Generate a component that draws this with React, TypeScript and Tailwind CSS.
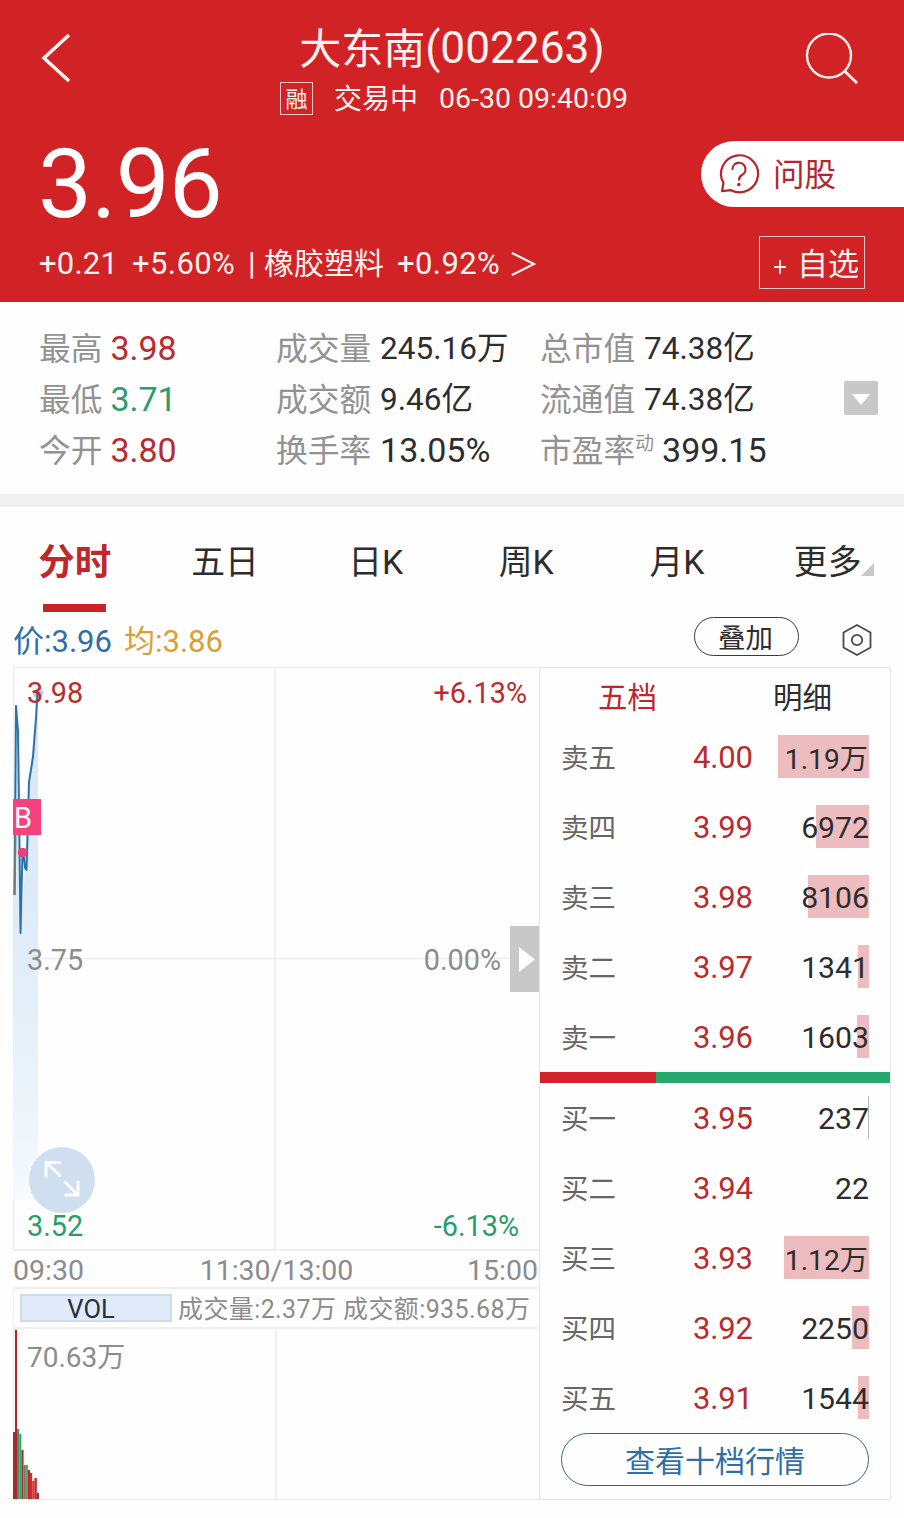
import clsx from 'clsx';

interface Level {
  label: string;
  price: string;
  volume: string;
  bar: number;
}

interface Stat {
  label: string;
  value: string;
  sup?: string;
  tone?: 'up' | 'down';
}

const TABS = ['分时', '五日', '日K', '周K', '月K', '更多'];

const STATS: Stat[][] = [
  [
    { label: '最高', value: '3.98', tone: 'up' },
    { label: '最低', value: '3.71', tone: 'down' },
    { label: '今开', value: '3.80', tone: 'up' },
  ],
  [
    { label: '成交量', value: '245.16万' },
    { label: '成交额', value: '9.46亿' },
    { label: '换手率', value: '13.05%' },
  ],
  [
    { label: '总市值', value: '74.38亿' },
    { label: '流通值', value: '74.38亿' },
    { label: '市盈率', sup: '动', value: '399.15' },
  ],
];

const ASKS: Level[] = [
  { label: '卖五', price: '4.00', volume: '1.19万', bar: 91 },
  { label: '卖四', price: '3.99', volume: '6972', bar: 53 },
  { label: '卖三', price: '3.98', volume: '8106', bar: 61 },
  { label: '卖二', price: '3.97', volume: '1341', bar: 11 },
  { label: '卖一', price: '3.96', volume: '1603', bar: 12 },
];

const BIDS: Level[] = [
  { label: '买一', price: '3.95', volume: '237', bar: 1 },
  { label: '买二', price: '3.94', volume: '22', bar: 0 },
  { label: '买三', price: '3.93', volume: '1.12万', bar: 85 },
  { label: '买四', price: '3.92', volume: '2250', bar: 17 },
  { label: '买五', price: '3.91', volume: '1544', bar: 11 },
];

// x, width, height, color
const VOLUME_BARS: [number, number, number, string][] = [
  [0, 2, 67, '#a8282d'],
  [2, 2, 169, '#b3242a'],
  [4, 2.2, 70, '#2f9c69'],
  [6.2, 2.2, 65, '#35a873'],
  [8.4, 2.2, 49, '#b0302f'],
  [10.6, 2.2, 34, '#6c7d58'],
  [12.8, 2.2, 34, '#6f9573'],
  [15, 2, 29, '#c3262b'],
  [17, 2.2, 26, '#d12a2e'],
  [19.2, 2.2, 18, '#d5393c'],
  [21.4, 2.4, 21, '#c3262b'],
  [23.8, 2.2, 6, '#a8282d'],
];

const hasCjk = (text: string) => /[\u4e00-\u9fff]/.test(text);

function Header() {
  return (
    <header className="h-[302px] bg-[#d12325] text-[#fff1ee]">
      <div className="flex h-[130px] items-start justify-between pl-[40px] pr-[44px] pt-[24px]">
        <svg className="mt-[8px] h-[52px] w-[60px]" viewBox="0 0 60 52" fill="none" stroke="currentColor" strokeWidth="3.6">
          <path d="M29 3 L4 26 L29 49" />
        </svg>
        <div className="flex flex-col items-center">
          <h1 className="flex h-[48px] leading-[48px]">
            <span className="pt-[2px] text-[42px]">大东南</span>
            <span className="text-[44.200px]">(002263)</span>
          </h1>
          <div className="mt-[9px] flex h-[35px] items-center pl-[4px] text-[28px] leading-[34px]">
            <span className="flex h-[33px] w-[33px] items-center justify-center border border-[#f7c9c6] pt-[3px] text-[22px]">融</span>
            <span className="ml-[21px] pt-[2px]">交易中</span>
            <span className="ml-[21px] text-[28.500px]">06-30 09:40:09</span>
          </div>
        </div>
        <svg className="mt-[9px] h-[54px] w-[56px]" viewBox="0 0 56 54" fill="none" stroke="currentColor" strokeWidth="2.4">
          <circle cx="25" cy="22.500" r="22" />
          <path d="M40.500 38 L53 50" strokeWidth="2.800" />
        </svg>
      </div>
      <div className="flex h-[105px] items-start justify-between pl-[38px]">
        <span className="mt-[4px] text-[96px] leading-[100px] tracking-[-0.800px] text-white">3.96</span>
        <button className="mt-[11px] flex h-[66px] w-[203px] items-center rounded-l-full bg-white pl-[17px] text-[#b3262a]">
          <svg className="h-[42px] w-[42px]" viewBox="0 0 42 42" fill="none" stroke="currentColor" strokeWidth="2.2">
            <path d="M5.500 30 A18.500 18.500 0 1 1 13 37.200 L4 38.200 Z" strokeLinejoin="round" />
            <path d="M14.500 17 A6.500 6.500 0 1 1 24 22 Q21 23.500 21 27.500" />
            <circle cx="20.800" cy="31.500" r="1.800" fill="currentColor" stroke="none" />
          </svg>
          <span className="ml-[13px] pt-[4px] text-[31.500px] leading-[40px]">问股</span>
        </button>
      </div>
      <div className="flex h-[55px] items-center justify-between pl-[38px] pr-[39px] text-[31px]">
        <div className="flex items-center pt-[2px] leading-[40px]">
          <span className="w-[94px] pl-px tracking-[0.200px]">+0.21</span>
          <span className="w-[116px] tracking-[0.400px]">+5.60%</span>
          <span className="w-[16px]">|</span>
          <span className="w-[133px] pt-px text-[30px]">橡胶塑料</span>
          <span className="w-[114px] tracking-[0.400px]">+0.92%</span>
          <svg className="h-[26px] w-[26px]" viewBox="0 0 26 26" fill="none" stroke="currentColor" strokeWidth="2.2">
            <path d="M1 2 L23 13 L1 24" />
          </svg>
        </div>
        <button className="flex h-[53px] w-[106px] items-center justify-end border border-[#f7c9c6] pr-[5px] leading-[50px]">
          <svg className="mr-[10px] mt-[9px] h-[14px] w-[14px]" viewBox="0 0 14 14" stroke="currentColor" strokeWidth="1.8">
            <path d="M1 7 H13 M7 0 V14" />
          </svg>
          <span className="pt-[4px]">自选</span>
        </button>
      </div>
    </header>
  );
}

function Stats() {
  return (
    <section className="flex h-[192px] items-start pl-[39px] pt-[21px] text-[#2d2d2d]">
      {STATS.map((column, i) => (
        <div key={i} className={clsx(i === 0 && 'w-[237px]', i === 1 && 'w-[264px]', i === 2 && 'w-[304px]')}>
          {column.map((stat) => (
            <div key={stat.label} className="flex h-[51px] items-center leading-[51px]">
              <span className="pt-[2px] text-[31.700px] text-[#929292]">{stat.label}</span>
              {stat.sup && <span className="mb-[14px] text-[19px] text-[#929292]">{stat.sup}</span>}
              <span
                className={clsx(
                  hasCjk(stat.value) ? 'text-[31.500px]' : 'text-[34px]',
                  stat.sup || i === 0 ? 'ml-[8px]' : 'ml-[9px]',
                  stat.tone === 'up' && 'text-[#b92b2e]',
                  stat.tone === 'down' && 'text-[#2a9d6c]'
                )}
              >
                {stat.value}
              </span>
            </div>
          ))}
        </div>
      ))}
      <button className="mt-[58px] flex h-[34px] w-[34px] items-center justify-center rounded-[2px] bg-[#c8c8c8]">
        <svg className="mt-[3px] h-[11px] w-[18px]" viewBox="0 0 18 11" fill="white">
          <path d="M0 0 H18 L9 11 Z" />
        </svg>
      </button>
    </section>
  );
}

function Tabs() {
  return (
    <nav className="grid h-[105px] grid-cols-6 text-[33.800px] leading-[50px] text-[#2d2d2d]">
      {TABS.map((tab, i) => (
        <div key={tab} className="flex flex-col items-center pr-[2px] pt-[31px]">
          <span className={clsx('relative h-[66px]', i === 0 && 'pl-px text-[36.500px] font-bold text-[#c0272b]')}>
            {tab}
            {tab === '更多' && (
              <svg className="absolute -right-[13px] top-[25px] h-[13px] w-[13px]" viewBox="0 0 13 13" fill="#c8c8c8">
                <path d="M13 0 V13 H0 Z" />
              </svg>
            )}
          </span>
          {i === 0 && <span className="h-[8px] w-[63px] bg-[#c92327]" />}
        </div>
      ))}
    </nav>
  );
}

function QuoteBar() {
  return (
    <div className="flex h-[55px] items-start pl-[13px] pr-[31px] text-[31px] leading-[56px]">
      <span className="w-[111px] pt-[2px] text-[#2f6fa8]">价:3.96</span>
      <span className="flex-1 pt-[2px] text-[#d9a12f]">均:3.86</span>
      <button className="mt-[5px] h-[39px] w-[105px] rounded-full border border-[#3a3a3a] pr-[2px] text-[27.500px] leading-[41px] text-[#2d2d2d]">
        叠加
      </button>
      <svg className="ml-[42px] mt-[11px] h-[34px] w-[32px]" viewBox="0 0 32 34" fill="none" stroke="#4a4a4a" strokeWidth="1.8">
        <path d="M16 2 L29.500 9.500 V24.500 L16 32 L2.500 24.500 V9.500 Z" />
        <circle cx="16" cy="17" r="5.200" />
      </svg>
    </div>
  );
}

function PriceChart() {
  return (
    <div className="relative h-[582px] text-[28.800px] leading-[36px] text-[#8c8c8c]">
      <svg className="absolute inset-0 h-[582px] w-[527px]" viewBox="0 0 527 582" fill="none">
        <defs>
          <linearGradient id="area" x1="0" y1="0" x2="0" y2="1">
            <stop offset="0" stopColor="#d8e7f5" />
            <stop offset="0.6" stopColor="#e2eef8" />
            <stop offset="1" stopColor="#f6fafd" />
          </linearGradient>
        </defs>
        <path d="M0.500 582 V0.500 H526 M262 0 V582 M0 291.500 H526" stroke="#ededed" strokeWidth="1.500" />
        <path d="M0 533 V228 L3 39 L7.500 266 L12 203 L16 115 L25 26 V533 Z" fill="url(#area)" />
        <path
          d="M1.500 228 L3 39 L5 64 L6 140 L7.500 266 L9.500 186 L11 190 L12 201 L13.500 203 L14.500 170 L16 115 L20 90 L23 51 L24.500 25"
          stroke="#2b72ad"
          strokeWidth="2"
          strokeLinejoin="round"
        />
        <path d="M1.500 228 L2.500 168" stroke="#6d7f78" strokeWidth="2" />
        <circle cx="25" cy="26" r="5" fill="#2f6fb8" fillOpacity="0.35" />
        <path d="M9.500 169 V182" stroke="white" strokeWidth="2" strokeDasharray="5 2" />
        <circle cx="9.500" cy="185.500" r="4.800" fill="#ee3f78" />
      </svg>
      <div className="relative flex h-full flex-col justify-between pl-[14px] pt-[8px] pb-[5px]">
        <div className="flex justify-between pr-[12px] text-[#b92b2e]">
          <span>3.98</span>
          <span>+6.13%</span>
        </div>
        <div className="flex justify-between pr-[38px]">
          <span>3.75</span>
          <span>0.00%</span>
        </div>
        <div className="flex justify-between pr-[20px] text-[#2a9d6c]">
          <span>3.52</span>
          <span>-6.13%</span>
        </div>
      </div>
      <span className="absolute left-0 top-[132px] h-[36px] w-[28px] bg-[#f5427e] pl-[1px] text-[29px] leading-[38px] text-white">B</span>
      <button className="absolute left-[497px] top-[259px] flex h-[66px] w-[29px] items-center justify-center bg-[#c8c8c8]">
        <svg className="ml-[4px] h-[25px] w-[16px]" viewBox="0 0 16 25" fill="white">
          <path d="M0 0 L16 12.500 L0 25 Z" />
        </svg>
      </button>
      <svg className="absolute left-[16px] top-[480px] h-[66px] w-[66px]" viewBox="0 0 66 66" fill="none" stroke="white" strokeWidth="2.8">
        <circle cx="33" cy="33" r="33" fill="#cfdff0" stroke="none" />
        <path d="M32 15.500 H17 V30.500 M17 15.500 L31.500 29" />
        <path d="M35.500 48 H49 V34 M49 48 L35.500 34.500" />
      </svg>
    </div>
  );
}

function VolumeChart() {
  return (
    <div className="relative h-[171px] border-b border-l border-[#e9e9e9]">
      <svg className="absolute -left-px top-0 h-[170px] w-[527px]" viewBox="0 0 527 170">
        <path d="M263 0 V170" stroke="#ededed" strokeWidth="1.500" />
        {VOLUME_BARS.map(([x, width, height, color]) => (
          <rect key={x} x={x} y={170 - height} width={width} height={height} fill={color} />
        ))}
      </svg>
      <span className="relative ml-[13px] text-[28px] leading-[58px] text-[#8c8c8c]">70.63万</span>
    </div>
  );
}

function LevelRow({ label, price, volume, bar }: Level) {
  return (
    <div className="flex h-[70px] items-center pl-[21px] pr-[21px] leading-[43px]">
      <span className="w-[132px] pt-[3px] text-[27.500px] text-[#666]">{label}</span>
      <span className="text-[31px] tracking-[-0.200px] text-[#b92b2e]">{price}</span>
      <div className="relative ml-auto h-[43px] text-[#2d2d2d]">
        <span
          className={clsx('absolute -top-px right-0 h-[43px]', bar === 1 ? 'bg-[#b5b5b5]' : 'bg-[#edbcbf]')}
          style={{ width: bar }}
        />
        <span className={clsx('relative', hasCjk(volume) ? 'right-px top-[2px] text-[28.200px]' : 'text-[30.200px]')}>
          {volume}
        </span>
      </div>
    </div>
  );
}

function OrderBook() {
  return (
    <aside className="h-[833px] w-[352px] border border-[#e5e5e5]">
      <div className="grid h-[54px] grid-cols-2 text-center text-[29.500px] leading-[60px]">
        <span className="text-[#c0272b]">五档</span>
        <span className="text-[#2d2d2d]">明细</span>
      </div>
      {ASKS.map((level) => (
        <LevelRow key={level.label} {...level} />
      ))}
      <div className="flex h-[11px] bg-[#27a86e]">
        <span className="w-[116px] bg-[#d12329]" />
      </div>
      {BIDS.map((level) => (
        <LevelRow key={level.label} {...level} />
      ))}
      <button className="ml-[21px] block h-[53px] w-[308px] rounded-full border border-[#35658c] text-[30px] leading-[55px] text-[#2f6fa8]">
        查看十档行情
      </button>
    </aside>
  );
}

export default function App() {
  return (
    <main className="h-[1518px] w-[904px] overflow-hidden bg-[#fefefe] font-['Roboto','Noto_Sans_CJK_SC',sans-serif]">
      <Header />
      <Stats />
      <div className="h-[13px] bg-[#f0f0f0]" />
      <Tabs />
      <QuoteBar />
      <div className="flex pl-[13px]">
        <div className="w-[526px]">
          <PriceChart />
          <div className="flex h-[38px] justify-between border-t-2 border-[#f0f0f0] text-[28.500px] leading-[39px] text-[#8c8c8c]">
            <span>09:30</span>
            <span className="pl-[2px]">11:30/13:00</span>
            <span className="pr-px">15:00</span>
          </div>
          <div className="flex h-[42px] items-center whitespace-nowrap border-y-2 border-l border-[#f0f0f0] pl-[6px] text-[25px] leading-[28px] text-[#8c8c8c]">
            <span className="h-[28px] w-[152px] border-2 border-[#ccdcea] bg-[#e0eaf8] pr-[10px] text-center text-[25.500px] leading-[26px] text-[#262f3a]">
              VOL
            </span>
            <span className="ml-[6px] pt-[3px] tracking-[0.400px]">成交量:2.37万 成交额:935.68万</span>
          </div>
          <VolumeChart />
        </div>
        <OrderBook />
      </div>
    </main>
  );
}
